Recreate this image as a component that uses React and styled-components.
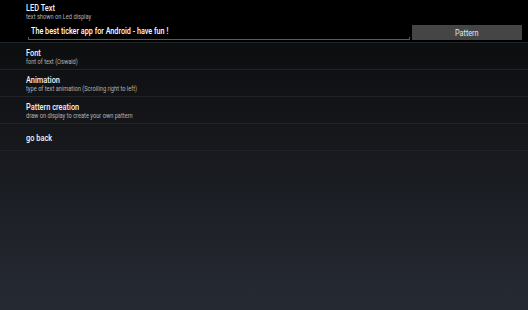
import React from "react";
import styled, { createGlobalStyle } from "styled-components";

const GlobalStyle = createGlobalStyle`
  html, body {
    margin: 0;
    padding: 0;
    height: 100%;
  }
  body {
    background: linear-gradient(to bottom, #050607 0%, #0d0e10 15%, #262a33 100%);
    font-family: Roboto, "Liberation Sans", sans-serif;
    color: #fff;
  }
`;

const Screen = styled.div`
  width: 528px;
  height: 310px;
  display: flex;
  flex-direction: column;
`;

const Item = styled.div`
  display: flex;
  flex-direction: column;
  justify-content: center;
  align-items: flex-start;
  height: 26px;
  padding-left: 26px;
  border-bottom: 1px solid #202327;
`;

// the screenshot is squeezed horizontally, so text is narrowed with scaleX
const Title = styled.div`
  font-size: 9.5px;
  font-weight: 500;
  color: #f2f2f2;
  line-height: 11px;
  white-space: nowrap;
  transform: scaleX(0.78);
  transform-origin: left center;
`;

const Summary = styled.div`
  font-size: 6.3px;
  color: #b4b4b4;
  line-height: 8px;
  white-space: nowrap;
  transform: scaleX(0.9);
  transform-origin: left center;
`;

const TopItem = styled.div`
  display: flex;
  flex-direction: column;
  height: 43px;
  border-bottom: 1px solid #202327;
  background: #000;
  padding-top: 2px;
  box-sizing: border-box;
`;

const TopLabels = styled.div`
  padding-left: 26px;
`;

const InputRow = styled.div`
  display: flex;
  align-items: flex-end;
  gap: 2px;
  margin-top: 3px;
  padding-left: 28px;
  padding-right: 6px;
`;

const TextField = styled.div`
  flex: 1;
  height: 15px;
  border-bottom: 1px solid #5a5a5a;
  padding-left: 3px;
  position: relative;
  &::before, &::after {
    content: "";
    position: absolute;
    bottom: -1px;
    width: 1px;
    height: 3px;
    background: #5a5a5a;
  }
  &::before { left: 0; }
  &::after { right: 0; }
`;

const FieldText = styled.div`
  font-size: 9.5px;
  font-weight: 500;
  color: #fff;
  line-height: 14px;
  white-space: nowrap;
  transform: scaleX(0.76);
  transform-origin: left center;
`;

const Button = styled.div`
  width: 110px;
  height: 15px;
  background: #454545;
  color: #e8e8e8;
  display: flex;
  align-items: center;
  justify-content: center;
`;

const ButtonLabel = styled.span`
  font-size: 8.5px;
  display: inline-block;
  transform: scaleX(0.85);
`;

export default function App() {
  const items = [
    { title: "Font", summary: "font of text (Oswald)" },
    { title: "Animation", summary: "type of text animation (Scrolling right to left)" },
    { title: "Pattern creation", summary: "draw on display to create your own pattern" },
  ];
  return (
    <>
      <GlobalStyle />
      <Screen>
        <TopItem>
          <TopLabels>
            <Title>LED Text</Title>
            <Summary>text shown on Led display</Summary>
          </TopLabels>
          <InputRow>
            <TextField>
              <FieldText>The best ticker app for Android - have fun !</FieldText>
            </TextField>
            <Button>
              <ButtonLabel>Pattern</ButtonLabel>
            </Button>
          </InputRow>
        </TopItem>
        {items.map((it) => (
          <Item key={it.title}>
            <Title>{it.title}</Title>
            <Summary>{it.summary}</Summary>
          </Item>
        ))}
        <Item>
          <Title>go back</Title>
        </Item>
      </Screen>
    </>
  );
}
